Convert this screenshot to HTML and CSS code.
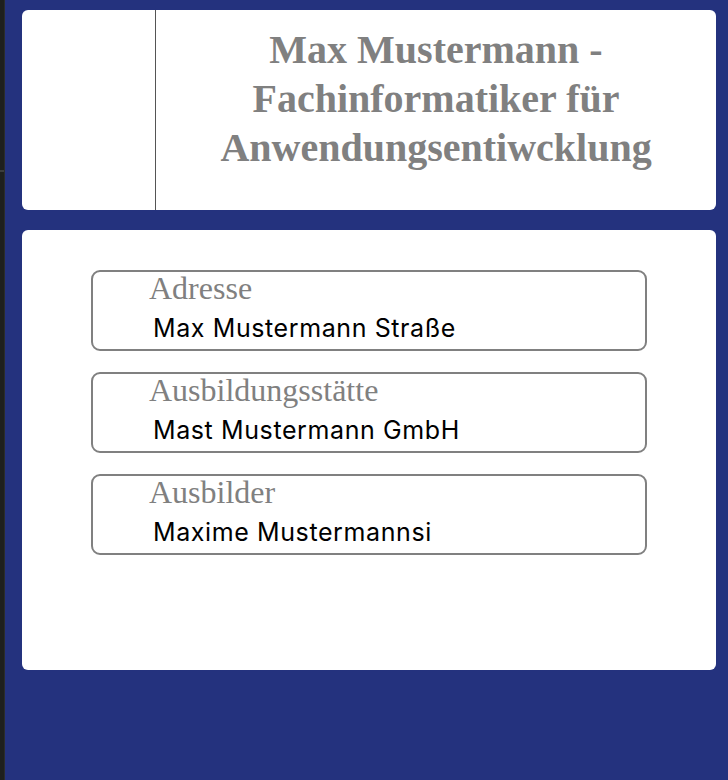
FILE: index.html
```html
<!DOCTYPE html>
<html lang="de">
<head>
<meta charset="utf-8">
<title>Max Mustermann</title>
<link rel="stylesheet" href="styles.css">
</head>
<body>
<div class="edge"><div class="edge-top"></div><div class="edge-mark"></div><div class="edge-rest"></div></div>
<main class="page">
  <header class="card header-card">
    <div class="header-side"></div>
    <h1 class="title">Max Mustermann - Fachinformatiker für Anwendungsentiwcklung</h1>
  </header>
  <section class="card info-card">
    <div class="field">
      <div class="field-label">Adresse</div>
      <div class="field-value">Max Mustermann Straße</div>
    </div>
    <div class="field">
      <div class="field-label">Ausbildungsstätte</div>
      <div class="field-value">Mast Mustermann GmbH</div>
    </div>
    <div class="field">
      <div class="field-label">Ausbilder</div>
      <div class="field-value">Maxime Mustermannsi</div>
    </div>
  </section>
</main>
</body>
</html>
```

FILE: styles.css
```css
html, body {
  margin: 0;
  padding: 0;
}
body {
  display: flex;
  height: 780px;
  background: #24327e;
  overflow: hidden;
}
.edge {
  width: 4px;
  flex: none;
  display: flex;
  flex-direction: column;
  background: #1e201e;
  border-right: 1px solid #2b2d2c;
}
.edge-top { height: 170px; }
.edge-mark { height: 2px; background: #3c3e3d; }
.edge-rest { flex: 1; }
.page {
  flex: 1;
  padding: 10px 12px 0 17px;
  display: flex;
  flex-direction: column;
  gap: 20px;
}
.card {
  background: #ffffff;
  border-radius: 6px;
}
.header-card {
  height: 200px;
  display: flex;
}
.header-side {
  width: 133px;
  flex: none;
  border-right: 1px solid #555555;
}
.title {
  flex: 1;
  margin: 0;
  padding: 15px 10px 0 10px;
  font-family: "Liberation Serif", "Times New Roman", serif;
  font-weight: bold;
  font-size: 40px;
  line-height: 49px;
  color: #808080;
  text-align: center;
}
.info-card {
  height: 440px;
  box-sizing: border-box;
  padding: 40px 69px 0 69px;
  display: flex;
  flex-direction: column;
  gap: 21px;
}
.field {
  border: 2px solid #808080;
  border-radius: 9px;
  height: 81px;
  box-sizing: border-box;
}
.field-label {
  font-family: "Liberation Serif", "Times New Roman", serif;
  font-size: 32px;
  line-height: 32px;
  color: #808080;
  padding-left: 56px;
}
.field-value {
  margin-top: 9px;
  font-family: Inter, "Liberation Sans", sans-serif;
  font-size: 25px;
  letter-spacing: 0.6px;
  line-height: 30px;
  color: #000000;
  padding-left: 60px;
}
```
